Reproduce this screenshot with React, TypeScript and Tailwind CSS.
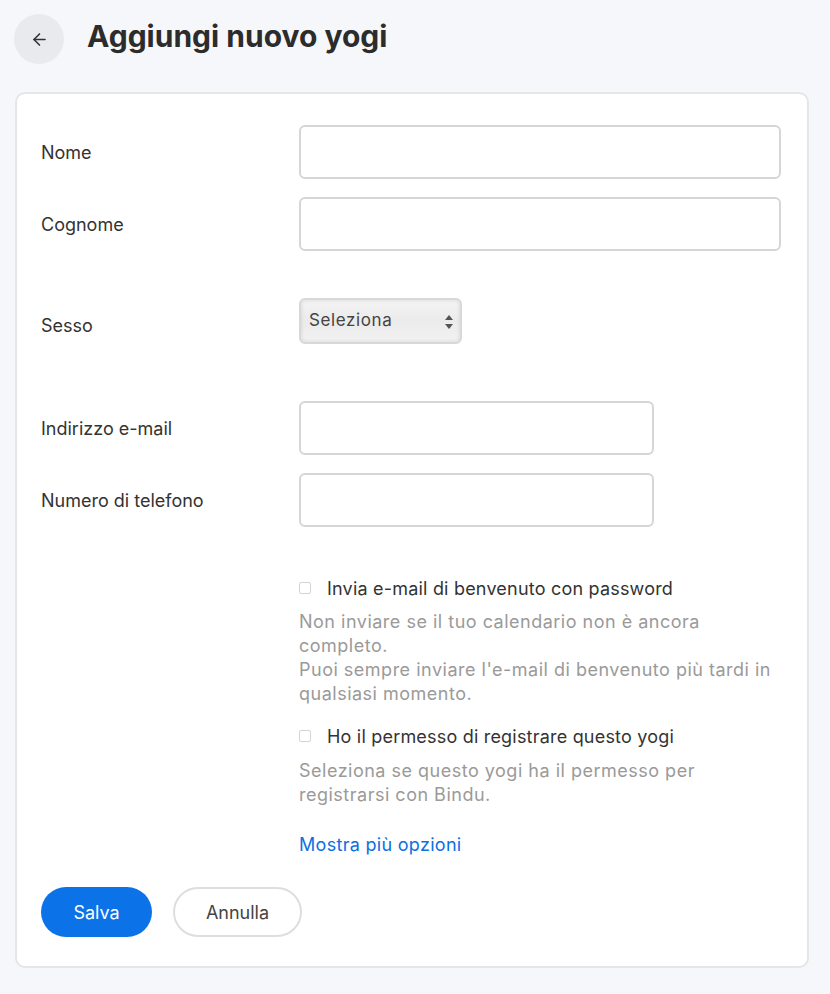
import { ArrowLeft } from "lucide-react"

function Field({ label, width }: { label: string; width: string }) {
    return (
        <div className="flex items-center">
            <label className="w-[258px] shrink-0 text-[18px] text-[#333]">{label}</label>
            <input type="text" className={`${width} h-[54px] rounded-[6px] border-2 border-[#d6d6d6] bg-white px-3 text-[17px] outline-none`} />
        </div>
    )
}

function Check({ label }: { label: string }) {
    return (
        <div className="flex items-center h-[24px]">
            <span className="w-[12px] h-[12px] rounded-[2px] border border-[#d4d4d4] bg-white"></span>
            <span className="ml-[16px] text-[18px] text-[#333] tracking-[0.2px]">{label}</span>
        </div>
    )
}

function App() {
    return (
        <div className="min-h-screen bg-[#f6f7fa] px-[15px] pt-[14px] pb-[26px]" style={{ fontFamily: "Inter, 'Noto Sans', sans-serif" }}>
            <div className="flex items-center -ml-px">
                <button className="w-[50px] h-[50px] rounded-full bg-[#e9eaee] flex items-center justify-center text-[#333]">
                    <ArrowLeft size={19} strokeWidth={2} />
                </button>
                <h1 className="ml-[23px] text-[30px] font-bold text-[#2c2c2c] -mt-[6px]">Aggiungi nuovo yogi</h1>
            </div>

            <div className="mt-[28px] w-[794px] bg-white border-2 border-[#e6e6e8] rounded-[10px] pt-[31px] pl-[24px] pr-[26px] pb-[29px]">
                <Field label="Nome" width="w-[482px]" />
                <div className="mt-[18px]">
                    <Field label="Cognome" width="w-[482px]" />
                </div>

                <div className="mt-[47px] flex items-center">
                    <label className="w-[258px] shrink-0 text-[18px] text-[#333] mt-[9px]">Sesso</label>
                    <div className="relative w-[163px] h-[46px] rounded-[6px] border-2 border-[#d8d8d8] bg-gradient-to-b from-[#f4f4f4] via-[#ebebeb] to-[#f2f2f2] shadow-[inset_0_0_4px_rgba(0,0,0,0.12)] flex items-center pl-[8px]">
                        <span className="text-[17px] text-[#444] tracking-[0.6px]">Seleziona</span>
                        <svg className="absolute right-[7px] top-[15px]" width="8" height="14" viewBox="0 0 8 14">
                            <path d="M4 0 L8 5 L0 5 Z" fill="#555" />
                            <path d="M4 14 L8 9 L0 9 Z" fill="#555" />
                        </svg>
                    </div>
                </div>

                <div className="mt-[57px]">
                    <Field label="Indirizzo e-mail" width="w-[355px]" />
                </div>
                <div className="mt-[18px]">
                    <Field label="Numero di telefono" width="w-[355px]" />
                </div>

                <div className="ml-[258px]">
                    <div className="mt-[49px]">
                        <Check label="Invia e-mail di benvenuto con password" />
                    </div>
                    <div className="mt-[10px] text-[18px] leading-[24px] text-[#9a9a9a] tracking-[0.5px]">
                        <div>Non inviare se il tuo calendario non è ancora</div>
                        <div>completo.</div>
                        <div>Puoi sempre inviare l'e-mail di benvenuto più tardi in</div>
                        <div>qualsiasi momento.</div>
                    </div>
                    <div className="mt-[18px]">
                        <Check label="Ho il permesso di registrare questo yogi" />
                    </div>
                    <div className="mt-[11px] text-[18px] leading-[24px] text-[#9a9a9a] tracking-[0.5px]">
                        <div>Seleziona se questo yogi ha il permesso per</div>
                        <div>registrarsi con Bindu.</div>
                    </div>
                    <div className="mt-[26px] text-[18px] leading-[24px] text-[#0b70e2] tracking-[0.3px]">
                        <a href="#">Mostra più opzioni</a>
                    </div>
                </div>

                <div className="mt-[30px] flex items-center gap-[21px]">
                    <button className="w-[111px] h-[50px] rounded-full bg-[#0b72e8] text-white text-[18px]">Salva</button>
                    <button className="w-[129px] h-[50px] rounded-full border-2 border-[#dcdedf] bg-white text-[#444] text-[18px]">Annulla</button>
                </div>
            </div>
        </div>
    )
}

export default App
